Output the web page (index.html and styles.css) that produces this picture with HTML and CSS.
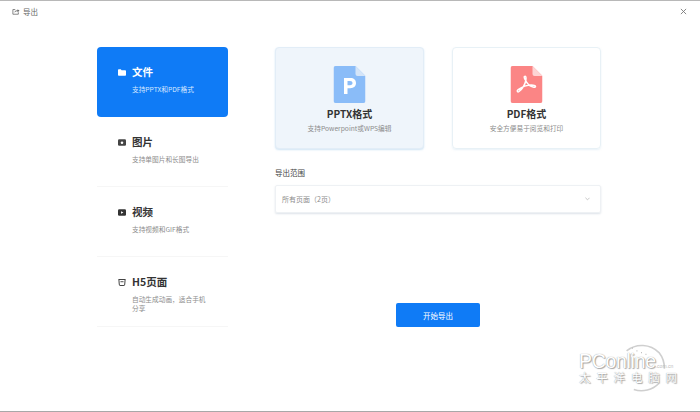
FILE: index.html
```html
<!DOCTYPE html>
<html lang="zh-CN">
<head>
<meta charset="utf-8">
<title>导出</title>
<link rel="stylesheet" href="styles.css">
</head>
<body>
<div class="app">
  <header class="header">
    <div class="header-title">
      <svg class="export-icon" viewBox="0 0 10 9" aria-hidden="true"><path d="M4 2H1V8h7V5.500" fill="none" stroke="#666" stroke-width="1"/><path d="M3 6c.3-2 1.800-3 4-3V1.500L9.500 3.500 7 5.500V4.200C5.300 4.200 4 4.700 3 6z" fill="#666"/></svg>
      <span>导出</span>
    </div>
    <svg class="close-icon" viewBox="0 0 8 8" aria-hidden="true"><path d="M1 1l6 6M7 1L1 7" stroke="#777" stroke-width="1" fill="none"/></svg>
  </header>
  <main class="main">
    <nav class="side">
      <div class="side-item active">
        <div class="side-title">
          <svg class="side-icon" viewBox="0 0 10 8" aria-hidden="true"><path d="M0 1a1 1 0 0 1 1-1h2.500l1 1.200H9a1 1 0 0 1 1 1V7a1 1 0 0 1-1 1H1a1 1 0 0 1-1-1z" fill="#fff"/></svg>
          <span>文件</span>
        </div>
        <p class="side-desc">支持PPTX和PDF格式</p>
      </div>
      <div class="side-item">
        <div class="side-title">
          <svg class="side-icon" viewBox="0 0 10 8" aria-hidden="true"><rect width="10" height="8" rx="1.500" fill="#444"/><circle cx="5" cy="4.200" r="1.600" fill="#fff"/></svg>
          <span>图片</span>
        </div>
        <p class="side-desc">支持单图片和长图导出</p>
      </div>
      <div class="side-item">
        <div class="side-title">
          <svg class="side-icon" viewBox="0 0 10 8" aria-hidden="true"><rect width="10" height="8" rx="1.500" fill="#333"/><path d="M3.800 2.300v3.400L6.800 4z" fill="#fff"/></svg>
          <span>视频</span>
        </div>
        <p class="side-desc">支持视频和GIF格式</p>
      </div>
      <div class="side-item">
        <div class="side-title">
          <svg class="side-icon" viewBox="0 0 10 9" aria-hidden="true"><path d="M1 .7h8l-.5 6.300Q8.400 8.300 7 8.300H3Q1.600 8.300 1.500 7z" fill="none" stroke="#444" stroke-width="1.300"/><path d="M3 3.500h4" stroke="#444" stroke-width="1.200"/></svg>
          <span class="latin">H5页面</span>
        </div>
        <p class="side-desc">自动生成动画，适合手机分享</p>
      </div>
    </nav>
    <section class="content">
      <div class="cards">
        <div class="card selected">
          <svg class="file-icon" viewBox="0 0 32 37" aria-hidden="true">
            <path d="M2 0h20l10 10v25a2 2 0 0 1-2 2H2a2 2 0 0 1-2-2V2a2 2 0 0 1 2-2z" fill="#8abcf8"/>
            <path d="M22 0l10 10h-8a2 2 0 0 1-2-2z" fill="#d5e5f8"/>
            <path d="M10.500 28V12h6.300c3.700 0 5.700 2 5.700 5s-2 5.200-5.700 5.200h-2.800V28zm3.500-8.800h2.500c1.700 0 2.500-.9 2.500-2.200s-.8-2.100-2.500-2.100H14z" fill="#fff"/>
          </svg>
          <h3 class="card-title">PPTX格式</h3>
          <p class="card-desc">支持Powerpoint或WPS编辑</p>
        </div>
        <div class="card">
          <svg class="file-icon" viewBox="0 0 32 37" aria-hidden="true">
            <path d="M2 0h20l10 10v25a2 2 0 0 1-2 2H2a2 2 0 0 1-2-2V2a2 2 0 0 1 2-2z" fill="#fb8585"/>
            <path d="M22 0l10 10h-8a2 2 0 0 1-2-2z" fill="#fdd5d5"/>
            <path d="M14 10.500c1.500-1 1.800 1.500 1.300 4-.8 4-3 8-6.800 11-1.600 1.200-2.500-.6-.8-1.800 4-2.800 10-5 15-4.500 3 .3 3 2.300.6 2-3.500-.4-7-4-8.700-7.700-.9-2-1.500-2.500-.6-3z" fill="none" stroke="#fff" stroke-width="1.500"/>
          </svg>
          <h3 class="card-title">PDF格式</h3>
          <p class="card-desc">安全方便易于阅览和打印</p>
        </div>
      </div>
      <div class="range-label">导出范围</div>
      <div class="select">
        <span>所有页面（2页）</span>
        <svg class="caret" viewBox="0 0 6 4" aria-hidden="true"><path d="M.5.500L3 3 5.500.5" fill="none" stroke="#bbb" stroke-width="1"/></svg>
      </div>
      <div class="actions">
        <button class="start" type="button">开始导出</button>
      </div>
    </section>
  </main>
  <div class="watermark">
    <svg class="wm-arc" viewBox="0 0 60 60" aria-hidden="true">
      <path d="M14 12A27 27 0 0 1 50 14A28 28 0 0 1 56 32" fill="none" stroke="#cfcfcf" stroke-width="1.800"/>
      <path d="M22 55A27 27 0 0 0 50 48" fill="none" stroke="#cfcfcf" stroke-width="1.800"/>
      <path d="M20 9h1M25 12h1M30 14h1M35 16h1" stroke="#bbb" stroke-width="1.500"/>
    </svg>
    <div class="wm-line"><span class="wm-brand">PConline</span><span class="wm-domain">.com.cn</span></div>
    <div class="wm-cn">太平洋电脑网</div>
  </div>
</div>
</body>
</html>
```
FILE: styles.css
```css
* { box-sizing: border-box; }
html, body { margin: 0; padding: 0; }
body {
  background: #fff;
  font-family: "Noto Sans CJK SC", "Inter", "Liberation Sans", sans-serif;
  color: #333;
}
.app {
  position: relative;
  width: 700px;
  height: 412px;
  overflow: hidden;
  border-top: 1px solid #b8b8b8;
  border-bottom: 1px solid #a8a8a8;
  display: flex;
  flex-direction: column;
}
.header {
  height: 46px;
  flex: none;
  display: flex;
  justify-content: space-between;
  align-items: flex-start;
  padding: 5px 13px 0 12px;
}
.header-title {
  display: flex;
  align-items: center;
  gap: 3px;
  font-size: 7.500px;
  line-height: 11px;
  color: #666;
}
.export-icon { width: 8px; height: 7px; }
.close-icon { width: 7px; height: 7px; margin-top: 2px; }
.main {
  display: flex;
  padding-left: 97px;
  gap: 47px;
}
.side { width: 131px; flex: none; }
.side-item {
  height: 70px;
  padding: 18px 20px 0 21px;
  border-bottom: 1px solid #f6f6f6;
}
.side-item.active {
  background: #0f7bf6;
  border-radius: 4px;
  border-bottom: 0;
  color: #fff;
}
.side-title {
  display: flex;
  align-items: center;
  gap: 6px;
  font-size: 10.500px;
  font-weight: 700;
  line-height: 14px;
  color: #333;
}
.active .side-title { color: #fff; }
.side-icon { width: 8px; height: 7px; flex: none; }
.side-desc {
  margin: 6px 0 0 14px;
  font-size: 6.700px;
  line-height: 9px;
  color: #8c8c8c;
}
.active .side-desc { color: #d5e7ff; }
.content {
  width: 326px;
  flex: none;
  display: flex;
  flex-direction: column;
}
.cards { display: flex; justify-content: space-between; }
.card {
  width: 149px;
  height: 102px;
  border: 1px solid #e8f1f6;
  border-radius: 4px;
  padding-top: 18px;
  display: flex;
  flex-direction: column;
  align-items: center;
  box-shadow: 0 1px 2px rgba(190, 215, 235, .35);
}
.card.selected {
  background: #eff5fb;
  border-color: #e2edf7;
  box-shadow: 0 1px 2px rgba(170, 205, 235, .55);
}
.file-icon { width: 32px; height: 37px; flex: none; transform: translateX(-.5px); }
.card-title {
  margin: 4px 0 0;
  font-size: 10px;
  line-height: 14px;
  font-weight: 700;
  color: #333;
}
.card-desc {
  margin: 2px 0 0;
  font-size: 6.700px;
  line-height: 10px;
  color: #8c8c8c;
}
.range-label {
  margin-top: 19px;
  font-size: 7.500px;
  line-height: 10px;
  color: #444;
}
.select {
  margin-top: 7px;
  height: 28px;
  display: flex;
  align-items: center;
  justify-content: space-between;
  padding: 0 10px 0 6px;
  border: 1px solid #eef1f4;
  border-radius: 2px;
  box-shadow: 0 1px 2px rgba(170, 185, 200, .4);
  font-size: 7px;
  color: #8c8c8c;
}
.caret { width: 5px; height: 4px; }
.actions {
  margin-top: 90px;
  display: flex;
  justify-content: center;
}
.start {
  width: 84px;
  height: 24px;
  border: 0;
  border-radius: 2px;
  background: #0f7bf6;
  color: #fff;
  font: 400 7.500px "Noto Sans CJK SC", sans-serif;
}
.watermark {
  position: absolute;
  left: 579px;
  top: 337px;
  width: 105px;
  height: 60px;
  color: #fff;
}
.wm-arc { position: absolute; left: 35px; top: 2px; width: 54px; height: 54px; }
.wm-line { position: absolute; left: 0; top: 15px; display: flex; align-items: baseline; white-space: nowrap; }
.wm-brand {
  font: 400 19.500px/17px "Liberation Sans", sans-serif;
  letter-spacing: -.3px;
  color: #fff;
  text-shadow: 0 0 1px #888, 1px 1px 1px #aaa;
}
.wm-domain {
  font: 400 5px/6px "Liberation Sans", sans-serif;
  color: #bbb;
}
.wm-cn {
  position: absolute;
  left: 0;
  top: 33px;
  font-size: 11.500px;
  line-height: 12px;
  letter-spacing: 5.800px;
  white-space: nowrap;
  color: #fff;
  text-shadow: 0 0 1px #888, 1px 1px 1px #aaa;
}
```
